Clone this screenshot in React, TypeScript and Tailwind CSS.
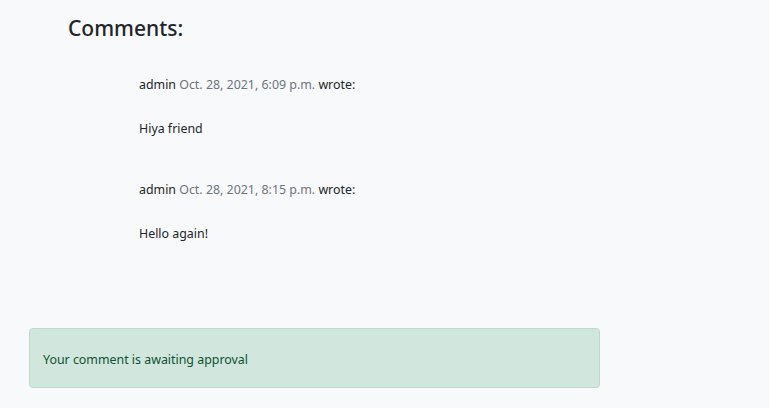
import React from "react";

const comments = [
  { author: "admin", date: "Oct. 28, 2021, 6:09 p.m.", body: "Hiya friend" },
  { author: "admin", date: "Oct. 28, 2021, 8:15 p.m.", body: "Hello again!" },
];

export default function App() {
  return (
    <div
      className="h-[408px] w-full bg-[#f8f9fa] text-[#212529] overflow-hidden"
      style={{ fontFamily: '"Noto Sans", "Open Sans", sans-serif' }}
    >
      <h4 className="pl-[68px] pt-[15px] text-[21px] leading-[26px] font-medium">Comments:</h4>
      <div className="pl-[139px] pt-[34px] flex flex-col gap-[41px]">
        {comments.map((c, i) => (
          <div key={i} className="flex flex-col gap-[24px] text-[12.4px] leading-[20px]">
            <p>
              {c.author} <span className="text-[#6c757d]">{c.date}</span> wrote:
            </p>
            <p>{c.body}</p>
          </div>
        ))}
      </div>
      <div className="ml-[29px] mt-[84px] w-[571px] h-[60px] flex items-center px-[13px] pt-[4px] rounded-[4px] border border-[#badbcc] bg-[#d1e7dd] text-[#0f5132] text-[12.4px]">
        Your comment is awaiting approval
      </div>
    </div>
  );
}
